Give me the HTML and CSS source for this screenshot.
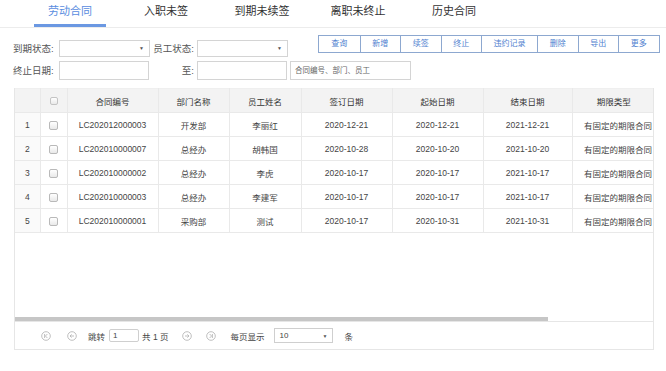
FILE: index.html
```html
<!DOCTYPE html>
<html lang="zh-CN">
<head>
    <meta charset="UTF-8">
    <title>劳动合同</title>
    <link rel="stylesheet" href="styles.css">
</head>
<body>

<div class="tabs">
    <div class="tab active"><span>劳动合同</span></div>
    <div class="tab"><span>入职未签</span></div>
    <div class="tab"><span>到期未续签</span></div>
    <div class="tab"><span>离职未终止</span></div>
    <div class="tab"><span>历史合同</span></div>
</div>

<div class="filters">
    <div class="frow frow-top">
        <label class="flabel">到期状态:</label>
        <div class="fbox fselect"><span class="caret">▼</span></div>
        <label class="flabel flabel-r">员工状态:</label>
        <div class="fbox fselect"><span class="caret">▼</span></div>
        <div class="toolbar">
            <button>查询</button>
            <button>新增</button>
            <button>续签</button>
            <button>终止</button>
            <button class="wide">违约记录</button>
            <button>删除</button>
            <button>导出</button>
            <button>更多</button>
        </div>
    </div>
    <div class="frow">
        <label class="flabel">终止日期:</label>
        <div class="fbox fdate"></div>
        <label class="flabel flabel-r">至:</label>
        <div class="fbox fdate"></div>
        <div class="fbox fsearch">合同编号、部门、员工</div>
    </div>
</div>

<div class="grid">
    <div class="grid-body">
        <table>
            <colgroup>
                <col style="width:25px"><col style="width:27px"><col style="width:91px">
                <col style="width:71px"><col style="width:72px"><col style="width:91px">
                <col style="width:91px"><col style="width:89px"><col style="width:83px">
            </colgroup>
            <thead>
                <tr>
                    <th></th>
                    <th><span class="chk"></span></th>
                    <th>合同编号</th>
                    <th>部门名称</th>
                    <th>员工姓名</th>
                    <th>签订日期</th>
                    <th>起始日期</th>
                    <th>结束日期</th>
                    <th>期限类型</th>
                </tr>
            </thead>
            <tbody>
                <tr><td class="num">1</td><td><span class="chk"></span></td><td>LC202012000003</td><td>开发部</td><td>李丽红</td><td>2020-12-21</td><td>2020-12-21</td><td>2021-12-21</td><td class="type">有固定的期限合同</td></tr>
                <tr><td class="num">2</td><td><span class="chk"></span></td><td>LC202010000007</td><td>总经办</td><td>胡韩国</td><td>2020-10-28</td><td>2020-10-20</td><td>2021-10-20</td><td class="type">有固定的期限合同</td></tr>
                <tr><td class="num">3</td><td><span class="chk"></span></td><td>LC202010000002</td><td>总经办</td><td>李虎</td><td>2020-10-17</td><td>2020-10-17</td><td>2021-10-17</td><td class="type">有固定的期限合同</td></tr>
                <tr><td class="num">4</td><td><span class="chk"></span></td><td>LC202010000003</td><td>总经办</td><td>李建军</td><td>2020-10-17</td><td>2020-10-17</td><td>2021-10-17</td><td class="type">有固定的期限合同</td></tr>
                <tr><td class="num">5</td><td><span class="chk"></span></td><td>LC202010000001</td><td>采购部</td><td>测试</td><td>2020-10-17</td><td>2020-10-31</td><td>2021-10-31</td><td class="type">有固定的期限合同</td></tr>
            </tbody>
        </table>
    </div>
    <div class="hscroll"><div class="thumb"></div></div>
    <div class="pager">
        <span class="pbtn pbtn-a">
            <svg width="10" height="10" viewBox="0 0 10 10"><circle cx="5" cy="5" r="4.3" fill="none" stroke="#b8b8b8" stroke-width="0.9"/><path d="M3.6 3v4M6.4 3L4.4 5l2 2" fill="none" stroke="#b8b8b8" stroke-width="0.9"/></svg>
        </span>
        <span class="pbtn pbtn-b">
            <svg width="10" height="10" viewBox="0 0 10 10"><circle cx="5" cy="5" r="4.3" fill="none" stroke="#b8b8b8" stroke-width="0.9"/><path d="M7 5H3M4.6 3.4L3 5l1.6 1.6" fill="none" stroke="#b8b8b8" stroke-width="0.9"/></svg>
        </span>
        <span class="ptext">跳转</span>
        <span class="pinput">1</span>
        <span class="ptext ptotal">共 1 页</span>
        <span class="pbtn pbtn-c">
            <svg width="10" height="10" viewBox="0 0 10 10"><circle cx="5" cy="5" r="4.3" fill="none" stroke="#b8b8b8" stroke-width="0.9"/><path d="M3 5h4M5.4 3.4L7 5 5.4 6.6" fill="none" stroke="#b8b8b8" stroke-width="0.9"/></svg>
        </span>
        <span class="pbtn pbtn-d">
            <svg width="10" height="10" viewBox="0 0 10 10"><circle cx="5" cy="5" r="4.3" fill="none" stroke="#b8b8b8" stroke-width="0.9"/><path d="M6.4 3v4M3.6 3l2 2-2 2" fill="none" stroke="#b8b8b8" stroke-width="0.9"/></svg>
        </span>
        <span class="ptext psize">每页显示</span>
        <span class="pselect">10<span class="caret">▼</span></span>
        <span class="ptext">条</span>
    </div>
</div>

</body>
</html>
```

FILE: styles.css
```css
body {
    margin: 0;
    background: #fff;
    font-family: "Liberation Sans", "Noto Sans CJK SC", sans-serif;
    color: #333;
}
.tabs {
    display: flex;
    padding-left: 22px;
    height: 27px;
    border-bottom: 1px solid #ececec;
}
.tab {
    width: 96px;
    display: flex;
    justify-content: center;
}
.tab span {
    width: 72px;
    height: 24px;
    line-height: 22px;
    text-align: center;
    font-size: 11px;
    color: #333;
    border-bottom: 3px solid transparent;
}
.tab.active span {
    color: #5a8de0;
    border-bottom-color: #6b98e2;
}

.filters {
    padding: 7px 0 0 13px;
}
.frow {
    display: flex;
    align-items: center;
    height: 22px;
}
.frow-top {
    align-items: flex-start;
    height: 24px;
}
.frow-top .flabel, .frow-top .fselect {
    margin-top: 5px;
}
.flabel {
    width: 46px;
    font-size: 9.5px;
    line-height: 17px;
    color: #555;
    white-space: nowrap;
}
.flabel-r {
    width: 44px;
    padding-right: 3px;
    text-align: right;
}
.fbox {
    box-sizing: border-box;
    border: 1px solid #d4d4d4;
    background: #fff;
}
.fselect {
    width: 91px;
    height: 17px;
    position: relative;
}
.caret {
    position: absolute;
    right: 5px;
    top: 4px;
    font-size: 5px;
    color: #555;
}
.fdate {
    width: 90px;
    height: 19px;
}
.fdate + .flabel {
    width: 45px;
}
.fsearch {
    width: 121px;
    height: 19px;
    margin-left: 3px;
    font-size: 7.5px;
    line-height: 17px;
    padding-left: 4px;
    color: #666;
}
.toolbar {
    display: flex;
    margin-left: 30px;
    border: 1px solid #8da8d0;
    height: 18px;
    box-sizing: border-box;
}
.toolbar button {
    width: 40.5px;
    padding: 0;
    border: none;
    border-left: 1px solid #8da8d0;
    background: #fff;
    font-family: inherit;
    font-size: 8px;
    color: #4f7fcf;
    line-height: 16px;
}
.toolbar button:first-child {
    border-left: none;
}
.toolbar button.wide {
    width: 56px;
}

.grid {
    margin: 7px 0 0 14px;
    width: 640px;
    box-sizing: border-box;
    border: 1px solid #e6e6e6;
    border-top: none;
}
.grid-body {
    height: 229px;
    overflow: hidden;
}
table {
    table-layout: fixed;
    border-collapse: collapse;
    width: 639px;
}
th, td {
    height: 23px;
    padding: 0;
    border: 1px solid #e9e9e9;
    font-size: 8.5px;
    font-weight: normal;
    text-align: center;
    color: #444;
    white-space: nowrap;
    overflow: hidden;
}
thead tr {
    background: #f3f3f3;
}
th {
    color: #333;
    border-top-color: #efefef;
}
tr > :first-child {
    border-left: none;
}
tr > :last-child {
    border-right: none;
}
td.num {
    background: #fafafa;
}
td.type {
    text-align: right;
    padding-right: 3px;
}
.chk {
    display: inline-block;
    width: 7px;
    height: 7px;
    border: 1px solid #b9b9b9;
    border-radius: 2px;
    background: linear-gradient(#fff, #e9e9e9);
    vertical-align: middle;
}
th .chk {
    width: 6px;
    height: 6px;
    border-color: #c4c4c4;
}
.hscroll {
    height: 4px;
    background: #fff;
}
.thumb {
    width: 533px;
    height: 4px;
    background: #c6c6c6;
}
.pager {
    display: flex;
    align-items: center;
    height: 27px;
    border-top: 1px solid #e6e6e6;
    padding-left: 26px;
    font-size: 8.5px;
    color: #444;
}
.pbtn {
    display: flex;
    width: 10px;
    height: 10px;
}
.pbtn-b {
    margin-left: 16px;
}
.ptext {
    margin-left: 11px;
    white-space: nowrap;
}
.pinput {
    box-sizing: border-box;
    width: 30px;
    height: 13px;
    margin-left: 4px;
    border: 1px solid #cfcfcf;
    border-radius: 2px;
    line-height: 11px;
    padding-left: 3px;
    font-size: 8px;
}
.ptotal {
    margin-left: 3px;
}
.pbtn-c {
    margin-left: 14px;
}
.pbtn-d {
    margin-left: 14px;
}
.psize {
    margin-left: 14px;
}
.pselect {
    position: relative;
    box-sizing: border-box;
    width: 59px;
    height: 15px;
    margin-left: 10px;
    border: 1px solid #cfcfcf;
    line-height: 13px;
    padding-left: 4px;
    font-size: 8px;
}
.pselect .caret {
    top: 1px;
    font-size: 5px;
}
```
